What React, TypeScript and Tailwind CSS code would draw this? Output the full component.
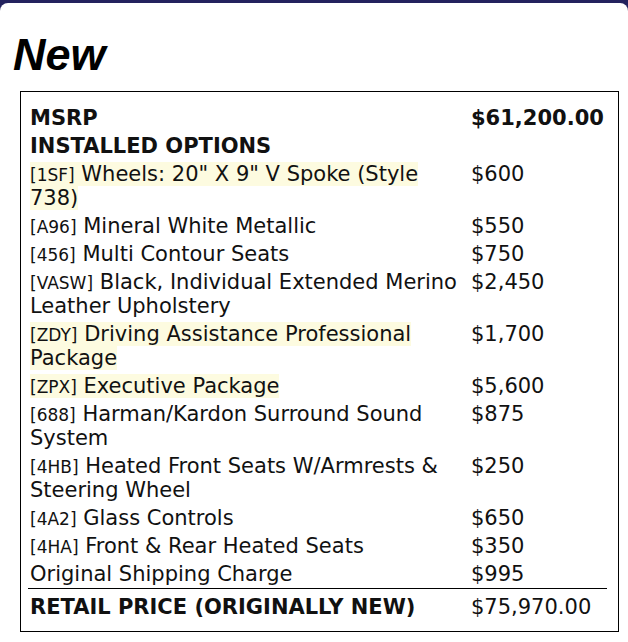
const rows: { code?: string; name: string; price: string; hl?: boolean }[] = [
  { code: '1SF', name: 'Wheels: 20" X 9" V Spoke (Style 738)', price: '$600', hl: true },
  { code: 'A96', name: 'Mineral White Metallic', price: '$550' },
  { code: '456', name: 'Multi Contour Seats', price: '$750' },
  { code: 'VASW', name: 'Black, Individual Extended Merino Leather Upholstery', price: '$2,450' },
  { code: 'ZDY', name: 'Driving Assistance Professional Package', price: '$1,700', hl: true },
  { code: 'ZPX', name: 'Executive Package', price: '$5,600', hl: true },
  { code: '688', name: 'Harman/Kardon Surround Sound System', price: '$875' },
  { code: '4HB', name: 'Heated Front Seats W/Armrests & Steering Wheel', price: '$250' },
  { code: '4A2', name: 'Glass Controls', price: '$650' },
  { code: '4HA', name: 'Front & Rear Heated Seats', price: '$350' },
  { name: 'Original Shipping Charge', price: '$995' },
]

export default function App() {
  return (
    <div className="h-[642px] w-[628px] bg-[#23225e] pt-[3px]">
      <div className="h-full rounded-t-lg bg-white pt-[28px]">
        <h1 className="pl-[13px] font-['Liberation_Sans',Arial,sans-serif] text-[45px] font-bold italic leading-[48px] text-black">
          New
        </h1>
        <div className="ml-[20px] mr-[9px] mt-[12px] border border-black pb-[10px] pl-[7px] pr-[11px] pt-[12px] font-['DejaVu_Sans',sans-serif] text-[21px] leading-[24px] text-[#111]">
          <table className="w-full border-collapse">
            <tbody>
              <tr>
                <td className="px-[2px] py-[2px] font-bold">MSRP</td>
                <td className="w-[138px] px-[2px] py-[2px] font-bold">$61,200.00</td>
              </tr>
              <tr>
                <td className="px-[2px] py-[2px] font-bold" colSpan={2}>INSTALLED OPTIONS</td>
              </tr>
              {rows.map((r) => (
                <tr key={r.name}>
                  <td className="px-[2px] py-[2px] align-top">
                    <span className={r.hl ? 'bg-[#fdfbe0] [box-decoration-break:clone]' : ''}>
                      {r.code && <span className="text-[17px] leading-none">[{r.code}]</span>}
                      {r.code && ' '}
                      {r.name}
                    </span>
                  </td>
                  <td className="px-[2px] py-[2px] align-top">{r.price}</td>
                </tr>
              ))}
              <tr className="border-t border-black">
                <td className="px-[2px] pb-[2px] pt-[6px] font-bold">RETAIL PRICE (ORIGINALLY NEW)</td>
                <td className="px-[2px] pb-[2px] pt-[6px]">$75,970.00</td>
              </tr>
            </tbody>
          </table>
        </div>
      </div>
    </div>
  )
}
